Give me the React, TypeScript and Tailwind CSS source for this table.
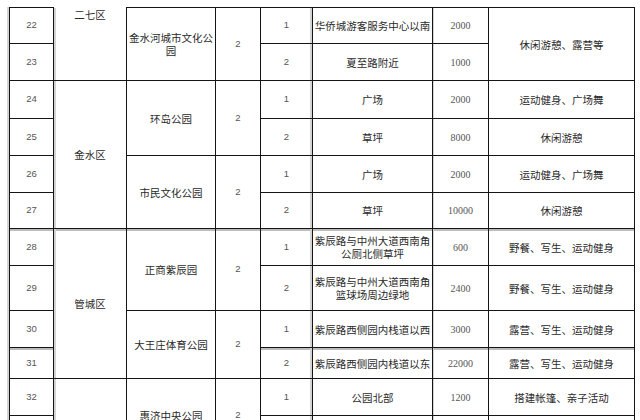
import React from "react";

type Row = {
  no: string;
  district?: { text: string; span: number; top?: boolean };
  park?: { text: string; span: number };
  sub: string;
  place: string;
  area: string;
  use?: { text: string; span: number };
  h: number;
  band?: boolean;
};

const rows: Row[] = [
  { no: "22", district: { text: "二七区", span: 2, top: true }, park: { text: "金水河城市文化公园", span: 2 }, sub: "1", place: "华侨城游客服务中心以南", area: "2000", use: { text: "休闲游憩、露营等", span: 2 }, h: 36 },
  { no: "23", sub: "2", place: "夏至路附近", area: "1000", h: 37 },
  { no: "24", district: { text: "金水区", span: 4 }, park: { text: "环岛公园", span: 2 }, sub: "1", place: "广场", area: "2000", use: { text: "运动健身、广场舞", span: 1 }, h: 38 },
  { no: "25", sub: "2", place: "草坪", area: "8000", use: { text: "休闲游憩", span: 1 }, h: 37 },
  { no: "26", park: { text: "市民文化公园", span: 2 }, sub: "1", place: "广场", area: "2000", use: { text: "运动健身、广场舞", span: 1 }, h: 37 },
  { no: "27", sub: "2", place: "草坪", area: "10000", use: { text: "休闲游憩", span: 1 }, h: 36 },
  { no: "28", district: { text: "管城区", span: 4 }, park: { text: "正商紫辰园", span: 2 }, sub: "1", place: "紫辰路与中州大道西南角公厕北侧草坪", area: "600", use: { text: "野餐、写生、运动健身", span: 1 }, h: 37, band: true },
  { no: "29", sub: "2", place: "紫辰路与中州大道西南角篮球场周边绿地", area: "2400", use: { text: "野餐、写生、运动健身", span: 1 }, h: 45 },
  { no: "30", park: { text: "大王庄体育公园", span: 2 }, sub: "1", place: "紫辰路西侧园内栈道以西", area: "3000", use: { text: "露营、写生、运动健身", span: 1 }, h: 37 },
  { no: "31", sub: "2", place: "紫辰路西侧园内栈道以东", area: "22000", use: { text: "露营、写生、运动健身", span: 1 }, h: 31, band: true },
  { no: "32", district: { text: "", span: 3 }, park: { text: "惠济中央公园", span: 2 }, sub: "1", place: "公园北部", area: "1200", use: { text: "搭建帐篷、亲子活动", span: 1 }, h: 37 },
  { no: "", sub: "", place: "", area: "", use: { text: "", span: 1 }, h: 37 },
  { no: "", park: { text: "", span: 1 }, sub: "", place: "", area: "", use: { text: "", span: 1 }, h: 36 },
];

const cjk = "font-['Noto_Sans_CJK_SC','Noto_Sans',sans-serif]";
const cell = "border border-[#141414] p-0 text-center align-middle";
const num = "font-['Liberation_Sans',Arial,sans-serif] text-[9.5px] text-[#555]";
const txt = `${cjk} text-[10.5px] leading-[13px] text-[#2a2a2a]`;
const areaFont = "font-['Liberation_Serif','Times_New_Roman',serif] text-[10px] text-[#555]";

export default function App() {
  return (
    <div className="h-[420px] w-[640px] overflow-hidden bg-white pl-[7px]">
      <div className="mt-[7px] border-l-2 border-[#d4d4d4] w-fit">
        <table className="w-[625px] table-fixed border-collapse">
          <colgroup>
            <col className="w-[44px]" />
            <col className="w-[73px]" />
            <col className="w-[89px]" />
            <col className="w-[45px]" />
            <col className="w-[52px]" />
            <col className="w-[120px]" />
            <col className="w-[56px]" />
            <col className="w-[146px]" />
          </colgroup>
          <tbody>
            {rows.map((r, i) => (
              <tr key={i} style={{ height: r.h }}>
                <td className={`${cell} ${num} ${r.band ? "shadow-[inset_0_2px_0_#bcbcbc]" : ""}`}>{r.no}</td>
                {r.district && (
                  <td
                    rowSpan={r.district.span}
                    className={`${cell} ${txt} ${
                      r.district.top ? "border-t-0 align-top leading-[10px]" : ""
                    } ${r.band ? "shadow-[inset_2px_0_0_#d4d4d4,inset_0_2px_0_#bcbcbc]" : "shadow-[inset_2px_0_0_#d4d4d4]"}`}
                  >
                    {r.district.text}
                  </td>
                )}
                {r.park && (
                  <td rowSpan={r.park.span} className={`${cell} ${txt} px-[2px] ${r.band ? "shadow-[inset_0_2px_0_#bcbcbc]" : ""}`}>
                    {r.park.text}
                  </td>
                )}
                {r.park && (
                  <td rowSpan={r.park.span} className={`${cell} ${num} ${r.band ? "shadow-[inset_0_2px_0_#bcbcbc]" : ""}`}>
                    {r.park.text ? "2" : ""}
                  </td>
                )}
                <td
                  className={`${cell} ${num} ${
                    r.band ? "shadow-[inset_-2px_0_0_#d4d4d4,inset_0_2px_0_#bcbcbc]" : "shadow-[inset_-2px_0_0_#d4d4d4]"
                  }`}
                >
                  {r.sub}
                </td>
                <td className={`${cell} ${txt} px-[1px] ${r.band ? "shadow-[inset_0_2px_0_#bcbcbc]" : ""}`}>{r.place}</td>
                <td
                  className={`${cell} ${areaFont} ${
                    r.band ? "shadow-[inset_1px_0_0_#d4d4d4,inset_0_2px_0_#bcbcbc]" : "shadow-[inset_1px_0_0_#d4d4d4]"
                  }`}
                >
                  {r.area}
                </td>
                {r.use && (
                  <td rowSpan={r.use.span} className={`${cell} ${txt} ${r.band ? "shadow-[inset_0_2px_0_#bcbcbc]" : ""}`}>
                    {r.use.text}
                  </td>
                )}
              </tr>
            ))}
          </tbody>
        </table>
      </div>
    </div>
  );
}
